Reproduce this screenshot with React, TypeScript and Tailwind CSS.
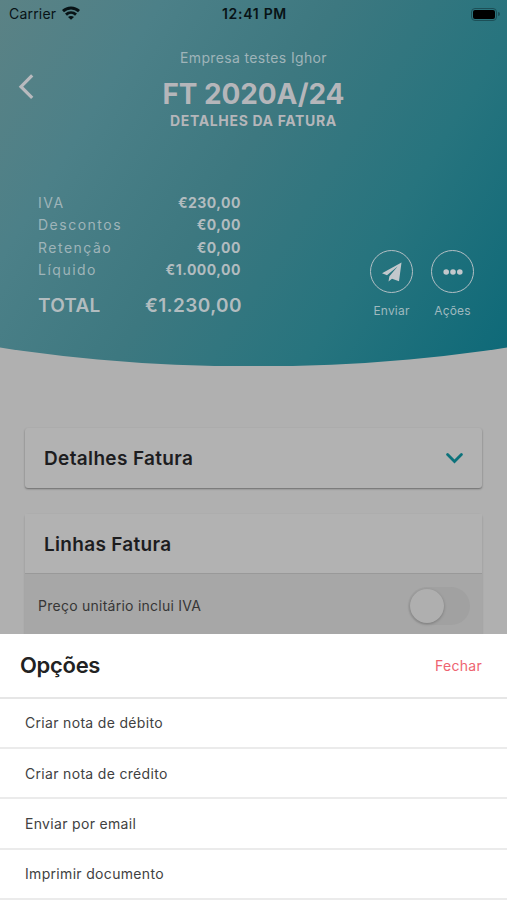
import React from "react";

const totals = [
  { label: "IVA", value: "€230,00" },
  { label: "Descontos", value: "€0,00" },
  { label: "Retenção", value: "€0,00" },
  { label: "Líquido", value: "€1.000,00" },
];

const options = [
  "Criar nota de débito",
  "Criar nota de crédito",
  "Enviar por email",
  "Imprimir documento",
];

function StatusBar() {
  return (
    <div className="grid h-7 grid-cols-3 items-center pl-[9px] pr-[7px] text-[#081316]">
      <div className="flex items-center gap-[6px]">
        <span className="text-[14px] leading-7 tracking-[0.2px]">Carrier</span>
        <svg className="-mt-[2px]" width="18" height="14" viewBox="0 0 18 14" fill="none" stroke="currentColor" strokeWidth="2.9">
          <path d="M1 5.1C5.5.9 12.5.9 17 5.1" />
          <path d="M4 8.6c2.9-2.6 7.1-2.6 10 0" />
          <path d="M9 13.8 6 11.1c1.7-1.5 4.3-1.5 6 0z" fill="currentColor" stroke="none" />
        </svg>
      </div>
      <span className="text-center text-[14px] font-semibold leading-7 tracking-[0.7px]">12:41 PM</span>
      <div className="flex items-center justify-end gap-px">
        <div className="h-[13px] w-[26px] rounded-[4px] border border-[#1c4f57] p-px">
          <div className="h-full w-full rounded-[2px] bg-black" />
        </div>
        <div className="h-1 w-[2px] rounded-r bg-[#1c4f57]" />
      </div>
    </div>
  );
}

function RoundAction({ label, children }: { label: string; children: React.ReactNode }) {
  return (
    <div className="flex w-[43px] flex-col items-center">
      <div className="flex h-[43px] w-[43px] items-center justify-center rounded-full border-[1.5px] border-[#b3bfc4]">
        {children}
      </div>
      <span className="mt-2 whitespace-nowrap text-[12px] leading-5 tracking-[0.2px] text-[#9fb9bf]">{label}</span>
    </div>
  );
}

function Header() {
  return (
    <header className="h-[366px] bg-[linear-gradient(122deg,#5b8285_0%,#4c8088_22%,#3d7880_46%,#27747e_72%,#0d6978_100%)] [clip-path:ellipse(798px_366.5px_at_50%_0)]">
      <StatusBar />
      <div className="grid grid-cols-[80px_1fr_80px] pt-5">
        <svg className="ml-[18px] mt-[26px]" width="18" height="26" viewBox="0 0 18 26" fill="none" stroke="#b9babe" strokeWidth="3.2">
          <path d="M14.2 1.4 3 12.7l11.2 11.2" />
        </svg>
        <div className="flex flex-col items-center text-[#b5b6ba]">
          <span className="text-[14px] leading-5 tracking-[0.35px] text-[#9fb4b9]">Empresa testes Ighor</span>
          <h1 className="mt-[8px] text-[28px] font-bold leading-9 -tracking-[0.1px]">FT 2020A/24</h1>
          <h2 className="-mt-px text-[14px] font-bold leading-[19px] tracking-[0.65px]">DETALHES DA FATURA</h2>
        </div>
      </div>
      <div className="flex items-start justify-between pl-[38px] pr-[33px] pt-[61px]">
        <div className="w-[204px] text-[#b2bcbf]">
          {totals.map((row) => (
            <div key={row.label} className="flex h-[22.5px] items-center justify-between text-[14px]">
              <span className="tracking-[1.5px] text-[#9fb4b9]">{row.label}</span>
              <span className="-translate-x-px font-bold tracking-[0.5px]">{row.value}</span>
            </div>
          ))}
          <div className="mt-[11px] flex items-center justify-between text-[19px] font-semibold leading-7">
            <span className="tracking-[0.2px]">TOTAL</span>
            <span className="tracking-[0.4px]">€1.230,00</span>
          </div>
        </div>
        <div className="mt-[59px] flex gap-[18px]">
          <RoundAction label="Enviar">
            <svg width="20" height="20" viewBox="0 0 20 20" fill="#c3c8cc">
              <path d="M19.5.5 0 11.2l5 2.1L15.6 4.6 7.4 14.2l-.9 5.3 3.5-2.7 7 2.4z" />
            </svg>
          </RoundAction>
          <RoundAction label="Ações">
            <svg width="20" height="6" viewBox="0 0 20 6" fill="#c3c8cc">
              <circle cx="3.2" cy="3" r="2.8" />
              <circle cx="10" cy="3" r="2.8" />
              <circle cx="16.8" cy="3" r="2.8" />
            </svg>
          </RoundAction>
        </div>
      </div>
    </header>
  );
}

function OptionsSheet() {
  return (
    <div className="absolute inset-x-0 bottom-0 h-[266px] bg-white">
      <div className="flex h-[64.5px] items-center justify-between border-b-2 border-[#e6e6e6] pl-5 pr-[25px]">
        <h3 className="text-[22px] font-semibold tracking-[-0.3px] text-[#222]">Opções</h3>
        <button className="text-[14px] tracking-[0.3px] text-[#ee6470]">Fechar</button>
      </div>
      {options.map((option) => (
        <div key={option} className="flex h-[50.4px] items-center border-b-2 border-[#ebebeb] pl-[25px] text-[14px] tracking-[0.32px] text-[#414141]">
          {option}
        </div>
      ))}
    </div>
  );
}

export default function App() {
  return (
    <div className="relative h-[900px] w-[507px] overflow-hidden bg-[#b0b0b0] font-['Inter',sans-serif]">
      <Header />
      <main className="px-[25px] pt-[62px]">
        <section className="flex h-[60px] items-center justify-between rounded-[3px] bg-[#b2b2b2] pl-[19px] pr-[19px] shadow-[0_1px_2px_rgba(0,0,0,0.4)]">
          <h3 className="pt-[2px] text-[19px] font-semibold tracking-[0.35px] text-[#1d1d1f]">Detalhes Fatura</h3>
          <svg width="17" height="11" viewBox="0 0 17 11" fill="none" stroke="#0c727b" strokeWidth="2.8" strokeLinecap="round">
            <path d="m1.6 1.6 6.9 7 6.9-7" />
          </svg>
        </section>
        <section className="mt-[26px] h-[140px] rounded-[3px] bg-[#a7a7a7] shadow-[0_1px_2px_rgba(0,0,0,0.22)]">
          <div className="flex h-[60px] items-center border-b border-[#999] bg-[#b2b2b2] pl-[19px] pt-[3px]">
            <h3 className="text-[19px] font-semibold tracking-[0.3px] text-[#1d1d1f]">Linhas Fatura</h3>
          </div>
          <div className="flex h-16 items-center justify-between pl-[13px] pr-3 text-[14px] text-[#363636]">
            <span className="pb-px tracking-[0.25px]">Preço unitário inclui IVA</span>
            <div className="h-[38px] w-[62px] rounded-full bg-[#a1a1a1] p-[2px]">
              <div className="h-[34px] w-[34px] rounded-full bg-[#afafaf] shadow-[0_1px_3px_rgba(0,0,0,0.25)]" />
            </div>
          </div>
        </section>
      </main>
      <OptionsSheet />
    </div>
  );
}
